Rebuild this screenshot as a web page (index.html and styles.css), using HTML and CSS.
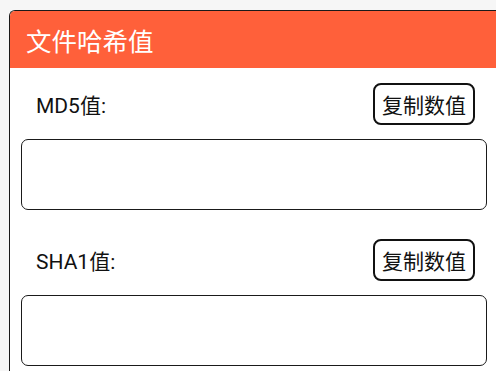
FILE: index.html
```html
<!DOCTYPE html>
<html lang="zh">
<head>
<meta charset="utf-8">
<title>文件哈希值</title>
<link rel="stylesheet" href="styles.css">
</head>
<body>
<div class="dialog">
  <div class="header">文件哈希值</div>
  <div class="content">
    <div class="section">
      <div class="row">
        <span class="label">MD5值:</span>
        <button class="copy">复制数值</button>
      </div>
      <div class="box"></div>
    </div>
    <div class="section">
      <div class="row">
        <span class="label">SHA1值:</span>
        <button class="copy">复制数值</button>
      </div>
      <div class="box"></div>
    </div>
  </div>
</div>
</body>
</html>
```
FILE: styles.css
```css
html, body {
  margin: 0;
  padding: 0;
  overflow: hidden;
  background: #f6f6f6;
  font-family: Roboto, "Noto Sans CJK SC", sans-serif;
}
.dialog {
  margin: 10px 0 0 9px;
  width: 500px;
  height: 360px;
  background: #ffffff;
  border-top: 1px solid #1a1a1a;
  border-left: 1px solid #1a1a1a;
  border-top-left-radius: 6px;
  overflow: hidden;
}
.header {
  height: 57px;
  background: #ff603a;
  color: #ffffff;
  font-size: 25.5px;
  line-height: 57px;
  padding-left: 16px;
  font-family: "Noto Sans CJK SC", sans-serif;
}
.content {
  width: 466px;
  margin-left: 11px;
  padding-top: 15px;
  display: flex;
  flex-direction: column;
  gap: 29px;
}
.section {
  display: flex;
  flex-direction: column;
  gap: 14px;
}
.row {
  display: flex;
  align-items: center;
  justify-content: space-between;
  padding: 0 12px 0 15px;
  height: 42px;
}
.label {
  font-size: 21px;
  color: #111111;
}
.copy {
  width: 102px;
  height: 42px;
  box-sizing: border-box;
  border: 2px solid #111111;
  border-radius: 8px;
  background: #ffffff;
  font-family: "Noto Sans CJK SC", sans-serif;
  font-size: 21px;
  color: #111111;
  padding: 0;
}
.box {
  height: 71px;
  box-sizing: border-box;
  border: 1px solid #1a1a1a;
  border-radius: 7px;
}
```
